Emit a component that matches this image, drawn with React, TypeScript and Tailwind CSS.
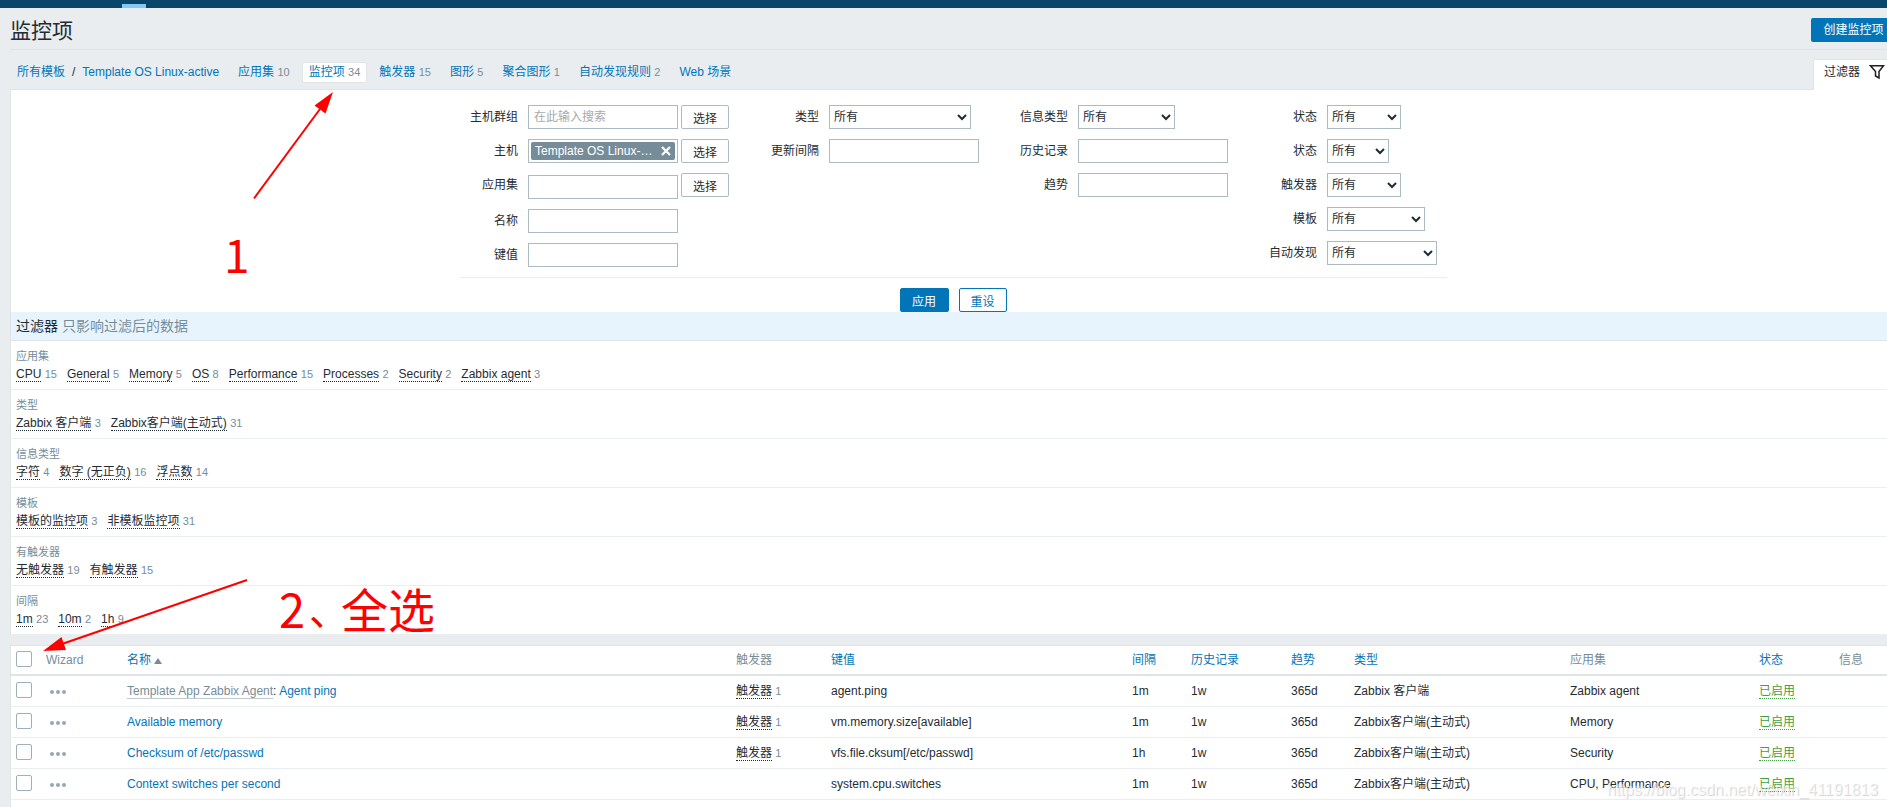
import type { ReactNode } from 'react';

type Facet = { label: string; values: [string, number][] };
type Item = {
  prefix?: string;
  name: string;
  triggers?: number;
  itemKey: string;
  interval: string;
  history: string;
  trends: string;
  type: string;
  apps: string;
};

const NAV: [string, number | null][] = [
  ['应用集', 10],
  ['监控项', 34],
  ['触发器', 15],
  ['图形', 5],
  ['聚合图形', 1],
  ['自动发现规则', 2],
  ['Web 场景', null],
];

const FACETS: Facet[] = [
  {
    label: '应用集',
    values: [
      ['CPU', 15],
      ['General', 5],
      ['Memory', 5],
      ['OS', 8],
      ['Performance', 15],
      ['Processes', 2],
      ['Security', 2],
      ['Zabbix agent', 3],
    ],
  },
  { label: '类型', values: [['Zabbix 客户端', 3], ['Zabbix客户端(主动式)', 31]] },
  { label: '信息类型', values: [['字符', 4], ['数字 (无正负)', 16], ['浮点数', 14]] },
  { label: '模板', values: [['模板的监控项', 3], ['非模板监控项', 31]] },
  { label: '有触发器', values: [['无触发器', 19], ['有触发器', 15]] },
  { label: '间隔', values: [['1m', 23], ['10m', 2], ['1h', 9]] },
];

const ITEMS: Item[] = [
  {
    prefix: 'Template App Zabbix Agent',
    name: 'Agent ping',
    triggers: 1,
    itemKey: 'agent.ping',
    interval: '1m',
    history: '1w',
    trends: '365d',
    type: 'Zabbix 客户端',
    apps: 'Zabbix agent',
  },
  {
    name: 'Available memory',
    triggers: 1,
    itemKey: 'vm.memory.size[available]',
    interval: '1m',
    history: '1w',
    trends: '365d',
    type: 'Zabbix客户端(主动式)',
    apps: 'Memory',
  },
  {
    name: 'Checksum of /etc/passwd',
    triggers: 1,
    itemKey: 'vfs.file.cksum[/etc/passwd]',
    interval: '1h',
    history: '1w',
    trends: '365d',
    type: 'Zabbix客户端(主动式)',
    apps: 'Security',
  },
  {
    name: 'Context switches per second',
    itemKey: 'system.cpu.switches',
    interval: '1m',
    history: '1w',
    trends: '365d',
    type: 'Zabbix客户端(主动式)',
    apps: 'CPU, Performance',
  },
];

const CHECKBOX =
  'block size-4 appearance-none rounded-[2px] border border-[#9fb0b9] bg-white checked:bg-[#0275b8]';

function Field({
  id,
  label,
  labelWidth,
  tall = false,
  children,
}: {
  id: string;
  label: string;
  labelWidth: string;
  tall?: boolean;
  children: ReactNode;
}) {
  return (
    <div className={tall ? 'flex h-[26px] gap-[10px]' : 'flex h-6 gap-[10px]'}>
      <label htmlFor={id} className={`text-right leading-6 ${labelWidth}`}>
        {label}
      </label>
      {children}
    </div>
  );
}

function TextBox({ id, placeholder }: { id: string; placeholder?: string }) {
  return (
    <input
      id={id}
      type="text"
      placeholder={placeholder}
      className="h-6 w-[150px] border border-[#acbbc2] bg-white px-[5px] pb-px outline-none placeholder:text-[#a9a9a9]"
    />
  );
}

function Choice({ id, width }: { id: string; width: string }) {
  return (
    <select id={id} className={`h-6 border border-[#acbbc2] bg-white ${width}`}>
      <option>所有</option>
    </select>
  );
}

function PickButton() {
  return (
    <button
      type="button"
      className="ml-[3px] h-6 w-12 rounded-[2px] border border-[#acbbc2] bg-white pt-1 leading-4"
    >
      选择
    </button>
  );
}

function Facets() {
  return (
    <>
      {FACETS.map((facet) => (
        <section key={facet.label} className="h-[49px] border-b border-[#ebeef0] px-[5px] pt-2">
          <h3 className="text-[11px] leading-[14px] text-[#768d99]">{facet.label}</h3>
          <ul className="flex gap-[10px] pt-[3px] leading-4">
            {facet.values.map(([name, count]) => (
              <li key={name}>
                <button type="button" className="border-b border-dotted border-[#1f2c33] leading-[14px]">
                  {name}
                </button>{' '}
                <span className="text-[11px] text-[#768d99]">{count}</span>
              </li>
            ))}
          </ul>
        </section>
      ))}
    </>
  );
}

function Head({ children, link = false }: { children?: ReactNode; link?: boolean }) {
  return (
    <th className="h-[30px] border-b-2 border-[#dfe4e7] px-[5px] text-left font-normal text-[#768d99]">
      {link ? (
        <a href="#sort" className="text-[#0275b8]">
          {children}
        </a>
      ) : (
        children
      )}
    </th>
  );
}

function Cell({ children }: { children?: ReactNode }) {
  return <td className="h-[31px] border-b border-[#ebeef0] px-[5px] whitespace-nowrap">{children}</td>;
}

function ItemsTable() {
  return (
    <table className="w-full table-fixed border-separate border-spacing-0 leading-[18px]">
      <colgroup>
        <col className="w-[30px]" />
        <col className="w-[81px]" />
        <col />
        <col className="w-[95px]" />
        <col className="w-[301px]" />
        <col className="w-[59px]" />
        <col className="w-[100px]" />
        <col className="w-[63px]" />
        <col className="w-[216px]" />
        <col className="w-[189px]" />
        <col className="w-[80px]" />
        <col className="w-[61px]" />
      </colgroup>
      <thead>
        <tr>
          <th className="h-[30px] border-b-2 border-[#dfe4e7] px-[5px] pb-[2px]">
            <input type="checkbox" aria-label="全选" className={CHECKBOX} />
          </th>
          <Head>Wizard</Head>
          <Head link>
            名称
            <span className="ml-[3px] inline-block border-x-4 border-b-[6px] border-x-transparent border-b-[#768d99]" />
          </Head>
          <Head>触发器</Head>
          <Head link>键值</Head>
          <Head link>间隔</Head>
          <Head link>历史记录</Head>
          <Head link>趋势</Head>
          <Head link>类型</Head>
          <Head>应用集</Head>
          <Head link>状态</Head>
          <Head>信息</Head>
        </tr>
      </thead>
      <tbody>
        {ITEMS.map((item) => (
          <tr key={item.name}>
            <td className="h-[31px] border-b border-[#ebeef0] px-[5px] pb-[2px]">
              <input type="checkbox" aria-label={item.name} className={CHECKBOX} />
            </td>
            <Cell>
              <button type="button" aria-label="Wizard" className="ml-1 flex gap-[2px] pt-[2px]">
                <span className="size-1 rounded-full bg-[#97a8b1]" />
                <span className="size-1 rounded-full bg-[#97a8b1]" />
                <span className="size-1 rounded-full bg-[#97a8b1]" />
              </button>
            </Cell>
            <Cell>
              {item.prefix && (
                <>
                  <a href="#template" className="border-b border-[#bfc9ce] text-[#768d99]">
                    {item.prefix}
                  </a>
                  {': '}
                </>
              )}
              <a href="#item" className="text-[#0275b8]">
                {item.name}
              </a>
            </Cell>
            <Cell>
              {item.triggers && (
                <>
                  <button type="button" className="border-b border-dotted border-[#1f2c33] leading-[14px]">
                    触发器
                  </button>{' '}
                  <span className="text-[11px] text-[#768d99]">{item.triggers}</span>
                </>
              )}
            </Cell>
            <Cell>{item.itemKey}</Cell>
            <Cell>{item.interval}</Cell>
            <Cell>{item.history}</Cell>
            <Cell>{item.trends}</Cell>
            <Cell>{item.type}</Cell>
            <Cell>{item.apps}</Cell>
            <Cell>
              <button
                type="button"
                className="border-b border-dotted border-[#429e47] leading-[14px] text-[#429e47]"
              >
                已启用
              </button>
            </Cell>
            <Cell />
          </tr>
        ))}
        <tr>
          <td className="h-[31px] px-[5px] pb-[2px]">
            <input type="checkbox" aria-label="监控项" className={CHECKBOX} />
          </td>
        </tr>
      </tbody>
    </table>
  );
}

export default function App() {
  return (
    <div className="relative h-screen overflow-hidden bg-[#e9edf0] font-['Liberation_Sans','Noto_Sans_CJK_SC',sans-serif] text-xs text-[#1f2c33]">
      <div className="h-2 bg-[#0a466a] pt-1 pl-[122px]">
        <div className="h-1 w-6 bg-[#85c8f5]" />
      </div>

      <div className="-mr-[9px] ml-[10px]">
        <header className="flex h-[42px] items-start justify-between border-b border-[#dfe4e7]">
          <h1 className="pt-2 text-[21px] leading-[30px]">监控项</h1>
          <button
            type="button"
            className="mt-[10px] h-6 w-[85px] rounded-[2px] bg-[#0275b8] pb-px leading-5 text-white"
          >
            创建监控项
          </button>
        </header>

        <div className="flex h-[39px] items-end justify-between">
          <nav className="flex h-full items-center pt-[5px] pl-[7px]">
            <a href="#templates" className="text-[#0275b8]">
              所有模板
            </a>
            <span className="px-[7px]">/</span>
            <a href="#template" className="text-[#0275b8]">
              Template OS Linux-active
            </a>
            <ul className="flex gap-[5px] pl-3">
              {NAV.map(([name, count]) => (
                <li
                  key={name}
                  className={
                    name === '监控项'
                      ? 'h-[21px] rounded-[2px] border border-[#dfe4e7] bg-white px-[6px] leading-[19px]'
                      : 'h-[21px] border border-transparent px-[6px] leading-[19px]'
                  }
                >
                  <a href="#section" className="text-[#0275b8]">
                    {name}
                  </a>
                  {count !== null && (
                    <>
                      {' '}
                      <span className="text-[11px] text-[#768d99]">{count}</span>
                    </>
                  )}
                </li>
              ))}
            </ul>
          </nav>
          <button
            type="button"
            className="relative z-10 -mb-px flex h-[31px] items-center gap-[9px] border border-b-0 border-[#dfe4e7] bg-white pr-[10px] pb-[6px] pl-[10px]"
          >
            过滤器
            <svg width="16" height="16" viewBox="0 0 16 16" fill="none" stroke="#1f1f1f" strokeWidth="1.5">
              <path d="M1.500 1.800h13L10 7.500v6.500L6.500 12V7.500z" />
            </svg>
          </button>
        </div>

        <main>
          <div className="border border-b-0 border-[#dfe4e7] bg-white">
            <form className="flex flex-col items-center pt-[15px]" onSubmit={(e) => e.preventDefault()}>
              <div className="flex w-[988px] border-b border-[#ebeef0] pb-[10px]">
                <div className="flex flex-col gap-[10px]">
                  <Field id="groups" label="主机群组" labelWidth="w-[59px]">
                    <div className="flex">
                      <TextBox id="groups" placeholder="在此输入搜索" />
                      <PickButton />
                    </div>
                  </Field>
                  <Field id="hosts" label="主机" labelWidth="w-[59px]">
                    <div className="flex">
                      <div className="flex h-6 w-[150px] items-center border border-[#acbbc2] px-[2px]">
                        <button
                          id="hosts"
                          type="button"
                          className="flex h-[18px] flex-1 items-center justify-between rounded-[2px] bg-[#768d99] px-1 leading-[18px] text-white"
                        >
                          Template OS Linux-…
                          <svg width="10" height="10" viewBox="0 0 10 10" stroke="#fff" strokeWidth="2.2">
                            <path d="M1 1l8 8M9 1l-8 8" />
                          </svg>
                        </button>
                      </div>
                      <PickButton />
                    </div>
                  </Field>
                  <Field id="application" label="应用集" labelWidth="w-[59px]" tall>
                    <div className="flex">
                      <div className="flex items-end">
                        <TextBox id="application" />
                      </div>
                      <PickButton />
                    </div>
                  </Field>
                  <Field id="name" label="名称" labelWidth="w-[59px]">
                    <TextBox id="name" />
                  </Field>
                  <Field id="key" label="键值" labelWidth="w-[59px]">
                    <TextBox id="key" />
                  </Field>
                </div>
                <div className="flex flex-col gap-[10px]">
                  <Field id="type" label="类型" labelWidth="w-[90px]">
                    <Choice id="type" width="w-[142px]" />
                  </Field>
                  <Field id="delay" label="更新间隔" labelWidth="w-[90px]">
                    <TextBox id="delay" />
                  </Field>
                </div>
                <div className="flex flex-col gap-[10px]">
                  <Field id="value-type" label="信息类型" labelWidth="w-[89px]">
                    <Choice id="value-type" width="w-[97px]" />
                  </Field>
                  <Field id="history" label="历史记录" labelWidth="w-[89px]">
                    <TextBox id="history" />
                  </Field>
                  <Field id="trends" label="趋势" labelWidth="w-[89px]">
                    <TextBox id="trends" />
                  </Field>
                </div>
                <div className="flex flex-col gap-[10px]">
                  <Field id="state" label="状态" labelWidth="w-[89px]">
                    <Choice id="state" width="w-[74px]" />
                  </Field>
                  <Field id="status" label="状态" labelWidth="w-[89px]">
                    <Choice id="status" width="w-[62px]" />
                  </Field>
                  <Field id="with-triggers" label="触发器" labelWidth="w-[89px]">
                    <Choice id="with-triggers" width="w-[74px]" />
                  </Field>
                  <Field id="templated" label="模板" labelWidth="w-[89px]">
                    <Choice id="templated" width="w-[98px]" />
                  </Field>
                  <Field id="discovered" label="自动发现" labelWidth="w-[89px]">
                    <Choice id="discovered" width="w-[110px]" />
                  </Field>
                </div>
              </div>
              <div className="flex gap-[10px] pt-[10px]">
                <button
                  type="submit"
                  className="h-6 w-[49px] rounded-[2px] border border-[#0275b8] bg-[#0275b8] pt-1 leading-4 text-white"
                >
                  应用
                </button>
                <button
                  type="reset"
                  className="h-6 w-12 rounded-[2px] border border-[#0275b8] bg-white pt-1 leading-4 text-[#0275b8]"
                >
                  重设
                </button>
              </div>
            </form>

            <h2 className="h-[29px] border-b border-[#dfe4e7] bg-[#e7f4fe] px-[5px] text-sm leading-[29px]">
              过滤器 <span className="text-[#768d99]">只影响过滤后的数据</span>
            </h2>
            <Facets />
          </div>

          <div className="mt-[10px] border border-[#dfe4e7] bg-white">
            <ItemsTable />
          </div>
        </main>
      </div>

      <svg
        className="pointer-events-none absolute top-0 left-0 z-20"
        width="400"
        height="700"
        viewBox="0 0 400 700"
        fill="#f00"
        stroke="#f00"
      >
        <path d="M254 198.500L320 109" strokeWidth="2" />
        <path d="M333 92L314.500 105.500L325.500 113.500z" stroke="none" />
        <path d="M247 580L62 644" strokeWidth="2" />
        <path d="M43 651L61.500 637L66 650z" stroke="none" />
      </svg>
      <p className="pointer-events-none absolute top-[220px] left-[224px] z-20 font-['Noto_Sans_CJK_SC',sans-serif] text-[46px] leading-[66px] text-[#f00]">
        1
      </p>
      <p className="pointer-events-none absolute top-[575px] left-[279px] z-20 flex font-['Noto_Sans_CJK_SC',sans-serif] text-[47px] leading-[66px] text-[#f00]">
        <span>2</span>
        <span className="w-9 pl-1 text-[40px]">、</span>
        <span>全选</span>
      </p>
      <p className="pointer-events-none absolute right-[9px] bottom-[7px] z-20 text-base leading-5 text-white/60 [text-shadow:1px_1px_1px_rgba(0,0,0,0.18)]">
        https://blog.csdn.net/weixin_41191813
      </p>
    </div>
  );
}
